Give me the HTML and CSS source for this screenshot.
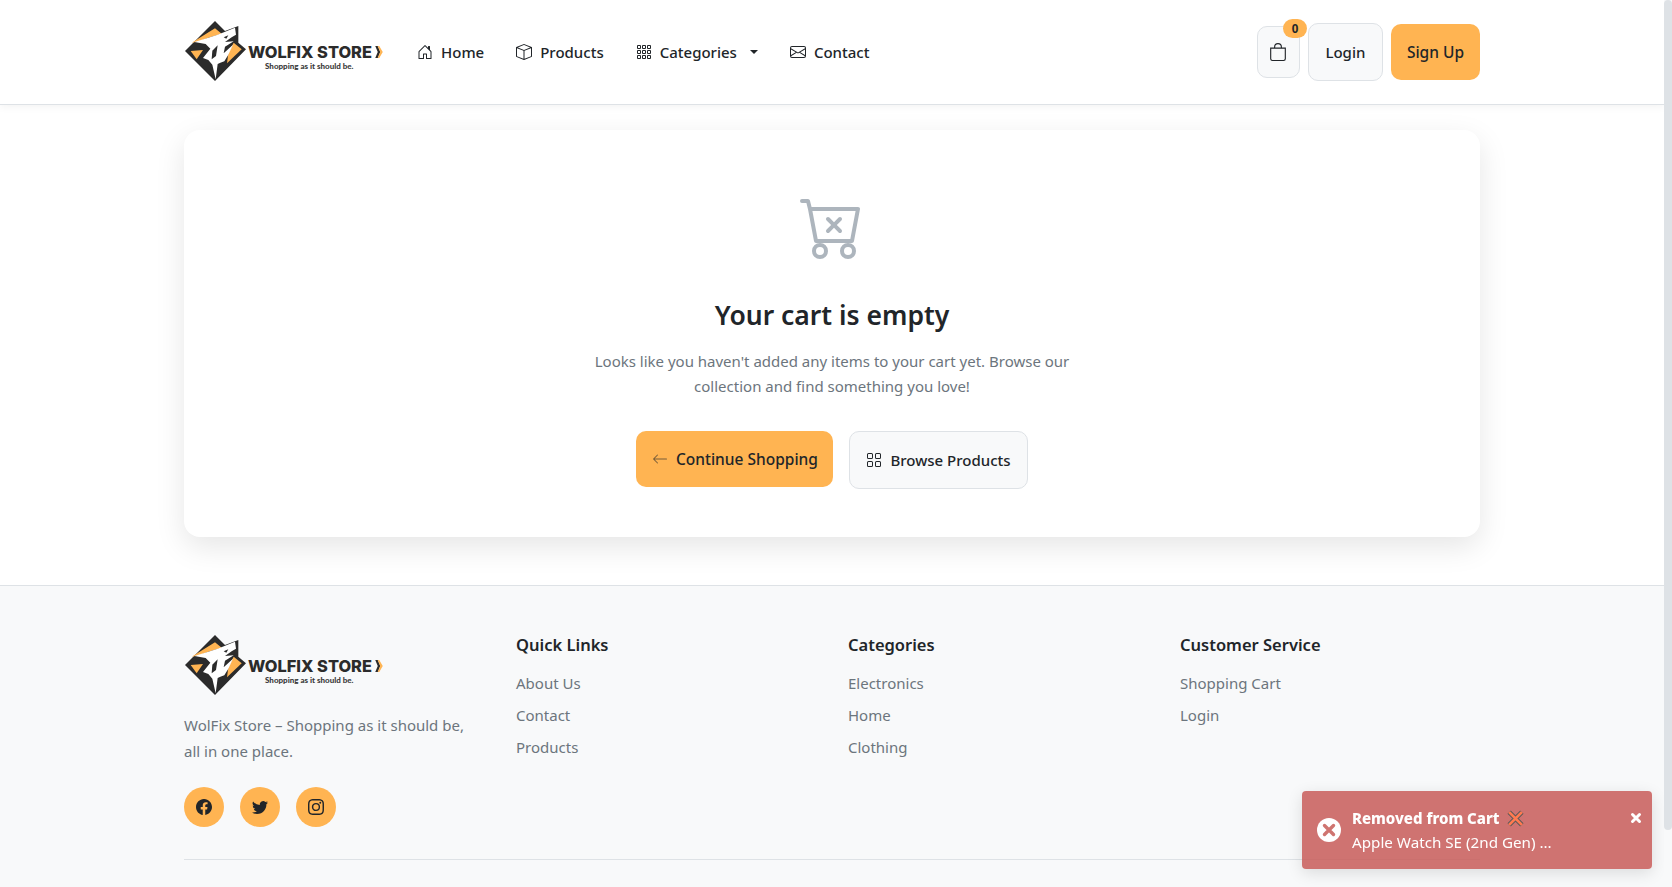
FILE: index.html
```html
<!DOCTYPE html>
<html lang="en">
<head>
<meta charset="utf-8">
<title>WolFix Store – Cart</title>
<link rel="stylesheet" href="styles.css">
</head>
<body>
<svg class="defs" width="0" height="0" aria-hidden="true">
  <defs>
    <symbol id="wolf" viewBox="27 32 186 186">
      <path fill="#2b2b2b" d="M120 35 L150 65 L190 50 L190 100 L213 120 L120 215 L30 125Z"/>
      <path fill="#ffb452" d="M50 100 L120 57 L140 73 L100 85 L75 95Z"/>
      <path fill="#ffb452" d="M47 125 L84 122 L65 150Z"/>
      <path fill="#ffb452" d="M176 100 L200 120 L156 162 L160 132Z"/>
      <path fill="#fff" d="M58 98 L100 85 L128 76 L180 55 L183 76 L170 84 L150 98 L176 96 L150 112 L146 132 L174 106 L160 136 L148 156 L136 160 L128 164 L122 210 L112 166 L100 152 L84 146 L106 118 L92 104Z"/>
      <path fill="#2b2b2b" d="M146 84 L160 78 L154 88Z"/>
      <path fill="#2b2b2b" d="M112 124 L128 108 L123 140 L110 150Z"/>
    </symbol>
    <symbol id="chev" viewBox="0 0 7.500 12">
      <path fill="#2b2b2b" d="M0 0H2.500L5 6 2.500 12H0L2.500 6z"/>
      <path fill="#ffb452" d="M2.500 0H4L7.500 6 4 12H2.500L5 6z"/>
    </symbol>
    <symbol id="i-house" viewBox="0 0 16 16"><path d="M8.354 1.146a.5.5 0 0 0-.708 0l-6 6A.5.5 0 0 0 1.5 7.5v7a.5.5 0 0 0 .5.5h4.5a.5.5 0 0 0 .5-.5v-4h2v4a.5.5 0 0 0 .5.5H14a.5.5 0 0 0 .5-.5v-7a.5.5 0 0 0-.146-.354L13 5.793V2.5a.5.5 0 0 0-.5-.5h-1a.5.5 0 0 0-.5.5v1.293zM2.500 14V7.707l5.500-5.500 5.500 5.500V14H10v-4a.5.5 0 0 0-.5-.5h-3a.5.5 0 0 0-.5.5v4z"/></symbol>
    <symbol id="i-box" viewBox="0 0 16 16"><path d="M8.186 1.113a.5.5 0 0 0-.372 0L1.846 3.5 8 5.961 14.154 3.5zM15 4.239l-6.5 2.6v7.922l6.5-2.6V4.24zM7.5 14.762V6.838L1 4.239v7.925zM7.443.184a1.5 1.5 0 0 1 1.114 0l7.129 2.852A.5.5 0 0 1 16 3.5v8.662a1 1 0 0 1-.629.928l-7.185 2.874a.5.5 0 0 1-.372 0L.63 13.09a1 1 0 0 1-.63-.928V3.5a.5.5 0 0 1 .314-.464z"/></symbol>
    <symbol id="i-grid3" viewBox="0 0 16 16"><path d="M4 2v2H2V2zm1 12v-2a1 1 0 0 0-1-1H2a1 1 0 0 0-1 1v2a1 1 0 0 0 1 1h2a1 1 0 0 0 1-1m0-5V7a1 1 0 0 0-1-1H2a1 1 0 0 0-1 1v2a1 1 0 0 0 1 1h2a1 1 0 0 0 1-1m0-5V2a1 1 0 0 0-1-1H2a1 1 0 0 0-1 1v2a1 1 0 0 0 1 1h2a1 1 0 0 0 1-1m5 10v-2a1 1 0 0 0-1-1H7a1 1 0 0 0-1 1v2a1 1 0 0 0 1 1h2a1 1 0 0 0 1-1m0-5V7a1 1 0 0 0-1-1H7a1 1 0 0 0-1 1v2a1 1 0 0 0 1 1h2a1 1 0 0 0 1-1m0-5V2a1 1 0 0 0-1-1H7a1 1 0 0 0-1 1v2a1 1 0 0 0 1 1h2a1 1 0 0 0 1-1M9 2v2H7V2zm5 0v2h-2V2zM4 7v2H2V7zm5 0v2H7V7zm5 0h-2v2h2zM4 12v2H2v-2zm5 0v2H7v-2zm5 0v2h-2v-2zM12 1a1 1 0 0 0-1 1v2a1 1 0 0 0 1 1h2a1 1 0 0 0 1-1V2a1 1 0 0 0-1-1zm-1 6a1 1 0 0 1 1-1h2a1 1 0 0 1 1 1v2a1 1 0 0 1-1 1h-2a1 1 0 0 1-1-1zm1 4a1 1 0 0 0-1 1v2a1 1 0 0 0 1 1h2a1 1 0 0 0 1-1v-2a1 1 0 0 0-1-1z"/></symbol>
    <symbol id="i-env" viewBox="0 0 16 16"><path d="M0 4a2 2 0 0 1 2-2h12a2 2 0 0 1 2 2v8a2 2 0 0 1-2 2H2a2 2 0 0 1-2-2zm2-1a1 1 0 0 0-1 1v.217l7 4.2 7-4.2V4a1 1 0 0 0-1-1zm13 2.383-4.708 2.825L15 11.105zm-.034 6.876-5.64-3.471L8 9.583l-1.326-.795-5.64 3.47A1 1 0 0 0 2 13h12a1 1 0 0 0 .966-.741M1 11.105l4.708-2.897L1 5.383z"/></symbol>
  </defs>
</svg>

<div class="page">
<header class="site-header">
  <div class="wrap header-row">
    <a class="logo" href="#">
      <svg class="logo-mark"><use href="#wolf"/></svg>
      <span class="logo-words">
        <span class="logo-name">WOLFIX STORE<svg class="logo-chev"><use href="#chev"/></svg></span>
        <span class="logo-tag">Shopping as it should be.</span>
      </span>
    </a>
    <nav class="main-nav">
      <a class="nav-link" href="#"><svg class="ico"><use href="#i-house"/></svg>Home</a>
      <a class="nav-link" href="#"><svg class="ico"><use href="#i-box"/></svg>Products</a>
      <a class="nav-link" href="#"><svg class="ico"><use href="#i-grid3"/></svg>Categories<span class="caret"></span></a>
      <a class="nav-link" href="#"><svg class="ico"><use href="#i-env"/></svg>Contact</a>
    </nav>
    <div class="header-actions">
      <a class="cart-btn" href="#">
        <svg class="ico ico-bag" viewBox="0 0 16 16"><path d="M8 1a2.5 2.5 0 0 1 2.5 2.5V4h-5v-.5A2.5 2.5 0 0 1 8 1m3.5 3v-.5a3.5 3.5 0 1 0-7 0V4H1v10a2 2 0 0 0 2 2h10a2 2 0 0 0 2-2V4zM2 5h12v9a1 1 0 0 1-1 1H3a1 1 0 0 1-1-1z"/></svg>
        <span class="badge">0</span>
      </a>
      <a class="btn btn-light btn-login" href="#">Login</a>
      <a class="btn btn-primary btn-signup" href="#">Sign Up</a>
    </div>
  </div>
</header>

<main class="wrap main-area">
  <section class="empty-card">
    <svg class="empty-icon" viewBox="0 0 16 16"><path d="M7.354 5.646a.5.5 0 1 0-.708.708L7.793 7.5 6.646 8.646a.5.5 0 1 0 .708.708L8.5 8.207l1.146 1.147a.5.5 0 0 0 .708-.708L9.207 7.5l1.147-1.146a.5.5 0 0 0-.708-.708L8.5 6.793z"/><path d="M.5 1a.5.5 0 0 0 0 1h1.11l.401 1.607 1.498 7.985A.5.5 0 0 0 4 12h1a2 2 0 1 0 0 4 2 2 0 0 0 0-4h7a2 2 0 1 0 0 4 2 2 0 0 0 0-4h1a.5.5 0 0 0 .491-.408l1.5-8A.5.5 0 0 0 14.5 3H2.89l-.405-1.621A.5.5 0 0 0 2 1zm3.915 10L3.102 4h10.796l-1.313 7zM6 14a1 1 0 1 1-2 0 1 1 0 0 1 2 0m7 0a1 1 0 1 1-2 0 1 1 0 0 1 2 0"/></svg>
    <h1 class="empty-title">Your cart is empty</h1>
    <p class="empty-text">Looks like you haven't added any items to your cart yet. Browse our collection and find something you love!</p>
    <div class="empty-actions">
      <a class="btn btn-primary" href="#"><svg class="ico ico-arrow" viewBox="0 0 16 16"><path d="M15 8a.5.5 0 0 0-.5-.5H2.707l3.147-3.146a.5.5 0 1 0-.708-.708l-4 4a.5.5 0 0 0 0 .708l4 4a.5.5 0 0 0 .708-.708L2.707 8.5H14.5A.5.5 0 0 0 15 8"/></svg>Continue Shopping</a>
      <a class="btn btn-light" href="#"><svg class="ico" viewBox="0 0 16 16"><path d="M1 2.5A1.5 1.5 0 0 1 2.5 1h3A1.5 1.5 0 0 1 7 2.5v3A1.5 1.5 0 0 1 5.5 7h-3A1.5 1.5 0 0 1 1 5.5zM2.5 2a.5.5 0 0 0-.5.5v3a.5.5 0 0 0 .5.5h3a.5.5 0 0 0 .5-.5v-3a.5.5 0 0 0-.5-.5zm6.5.5A1.5 1.5 0 0 1 10.5 1h3A1.5 1.5 0 0 1 15 2.5v3A1.5 1.5 0 0 1 13.5 7h-3A1.5 1.5 0 0 1 9 5.5zm1.5-.5a.5.5 0 0 0-.5.5v3a.5.5 0 0 0 .5.5h3a.5.5 0 0 0 .5-.5v-3a.5.5 0 0 0-.5-.5zM1 10.5A1.5 1.5 0 0 1 2.5 9h3A1.5 1.5 0 0 1 7 10.5v3A1.5 1.5 0 0 1 5.5 15h-3A1.5 1.5 0 0 1 1 13.5zm1.5-.5a.5.5 0 0 0-.5.5v3a.5.5 0 0 0 .5.5h3a.5.5 0 0 0 .5-.5v-3a.5.5 0 0 0-.5-.5zm6.5.5A1.5 1.5 0 0 1 10.5 9h3a1.5 1.5 0 0 1 1.5 1.5v3a1.5 1.5 0 0 1-1.5 1.5h-3A1.5 1.5 0 0 1 9 13.5zm1.5-.5a.5.5 0 0 0-.5.5v3a.5.5 0 0 0 .5.5h3a.5.5 0 0 0 .5-.5v-3a.5.5 0 0 0-.5-.5z"/></svg>Browse Products</a>
    </div>
  </section>
</main>

<footer class="site-footer">
  <div class="wrap">
    <div class="footer-grid">
      <div class="footer-brand">
        <a class="logo" href="#">
          <svg class="logo-mark"><use href="#wolf"/></svg>
          <span class="logo-words">
            <span class="logo-name">WOLFIX STORE<svg class="logo-chev"><use href="#chev"/></svg></span>
            <span class="logo-tag">Shopping as it should be.</span>
          </span>
        </a>
        <p class="brand-text">WolFix Store – Shopping as it should be, all in one place.</p>
        <div class="socials">
          <a class="social" href="#"><svg class="ico ico-social" viewBox="0 0 16 16"><path d="M16 8.049c0-4.446-3.582-8.05-8-8.05C3.58 0-.002 3.603-.002 8.05c0 4.017 2.926 7.347 6.75 7.951v-5.625h-2.03V8.05H6.75V6.275c0-2.017 1.195-3.131 3.022-3.131.876 0 1.791.157 1.791.157v1.98h-1.009c-.993 0-1.303.621-1.303 1.258v1.51h2.218l-.354 2.326H9.25V16c3.824-.604 6.75-3.934 6.75-7.951"/></svg></a>
          <a class="social" href="#"><svg class="ico ico-social" viewBox="0 0 16 16"><path d="M5.026 15c6.038 0 9.341-5.003 9.341-9.334q.002-.211-.006-.422A6.7 6.7 0 0 0 16 3.542a6.7 6.7 0 0 1-1.889.518 3.3 3.3 0 0 0 1.447-1.817 6.5 6.5 0 0 1-2.087.793A3.286 3.286 0 0 0 7.875 6.03a9.32 9.32 0 0 1-6.767-3.429 3.29 3.29 0 0 0 1.018 4.382A3.3 3.3 0 0 1 .64 6.575v.045a3.29 3.29 0 0 0 2.632 3.218 3.2 3.2 0 0 1-.865.115 3 3 0 0 1-.614-.057 3.28 3.28 0 0 0 3.067 2.277A6.6 6.6 0 0 1 .78 13.58a6 6 0 0 1-.78-.045A9.34 9.34 0 0 0 5.026 15"/></svg></a>
          <a class="social" href="#"><svg class="ico ico-social" viewBox="0 0 16 16"><path d="M8 0C5.829 0 5.556.01 4.703.048 3.85.088 3.269.222 2.76.42a3.9 3.9 0 0 0-1.417.923A3.9 3.9 0 0 0 .42 2.76C.222 3.268.087 3.85.048 4.7.01 5.555 0 5.827 0 8.001c0 2.172.01 2.444.048 3.297.04.852.174 1.433.372 1.942.205.526.478.972.923 1.417.444.445.89.719 1.416.923.51.198 1.09.333 1.942.372C5.555 15.99 5.827 16 8 16s2.444-.01 3.298-.048c.851-.04 1.434-.174 1.943-.372a3.9 3.9 0 0 0 1.416-.923c.445-.445.718-.891.923-1.417.197-.509.332-1.09.372-1.942C15.99 10.445 16 10.173 16 8s-.01-2.445-.048-3.299c-.04-.851-.175-1.433-.372-1.941a3.9 3.9 0 0 0-.923-1.417A3.9 3.9 0 0 0 13.24.42c-.51-.198-1.092-.333-1.943-.372C10.443.01 10.172 0 7.998 0zm-.717 1.442h.718c2.136 0 2.389.007 3.232.046.78.035 1.204.166 1.486.275.373.145.64.319.92.599s.453.546.598.92c.11.281.24.705.275 1.485.039.843.047 1.096.047 3.231s-.008 2.389-.047 3.232c-.035.78-.166 1.203-.275 1.485a2.5 2.5 0 0 1-.599.919c-.28.28-.546.453-.92.598-.28.11-.704.24-1.485.276-.843.038-1.096.047-3.232.047s-2.39-.009-3.233-.047c-.78-.036-1.203-.166-1.485-.276a2.5 2.5 0 0 1-.92-.598 2.5 2.5 0 0 1-.6-.92c-.109-.281-.24-.705-.275-1.485-.038-.843-.046-1.096-.046-3.233s.008-2.388.046-3.231c.036-.78.166-1.204.276-1.486.145-.373.319-.64.599-.92s.546-.453.92-.598c.282-.11.705-.24 1.485-.276.738-.034 1.024-.044 2.515-.045zm4.988 1.328a.96.96 0 1 0 0 1.92.96.96 0 0 0 0-1.92m-4.27 1.122a4.109 4.109 0 1 0 0 8.217 4.109 4.109 0 0 0 0-8.217m0 1.441a2.667 2.667 0 1 1 0 5.334 2.667 2.667 0 0 1 0-5.334"/></svg></a>
        </div>
      </div>
      <div class="footer-col">
        <h2 class="footer-title">Quick Links</h2>
        <a class="footer-link" href="#">About Us</a>
        <a class="footer-link" href="#">Contact</a>
        <a class="footer-link" href="#">Products</a>
      </div>
      <div class="footer-col">
        <h2 class="footer-title">Categories</h2>
        <a class="footer-link" href="#">Electronics</a>
        <a class="footer-link" href="#">Home</a>
        <a class="footer-link" href="#">Clothing</a>
      </div>
      <div class="footer-col">
        <h2 class="footer-title">Customer Service</h2>
        <a class="footer-link" href="#">Shopping Cart</a>
        <a class="footer-link" href="#">Login</a>
      </div>
    </div>
    <hr class="footer-rule">
  </div>
</footer>
</div>

<aside class="toast">
  <svg class="toast-icon" viewBox="0 0 24 24"><circle cx="12" cy="12" r="12" fill="#fff"/><path d="M7.500 7.500l9 9M16.500 7.500l-9 9" stroke="#cf7470" stroke-width="3.400" stroke-linecap="round"/></svg>
  <div class="toast-body">
    <div class="toast-title">Removed from Cart<svg class="toast-x" viewBox="0 0 16 16"><path d="M2 2l12 12M14 2L2 14" stroke="#5e5a5a" stroke-width="4.500"/><path d="M2 2l12 12M14 2L2 14" stroke="#ff7a50" stroke-width="2.600"/></svg></div>
    <div class="toast-msg">Apple Watch SE (2nd Gen) ...</div>
  </div>
  <svg class="toast-close" viewBox="0 0 12 12"><path d="M2.500 2.500l7 7M9.500 2.500l-7 7" stroke="#fff" stroke-width="3" stroke-linecap="round"/></svg>
</aside>
<div class="scroll-track"><div class="scroll-thumb"></div></div>
</body>
</html>
```
FILE: styles.css
```css
* { box-sizing: border-box; }
body {
  margin: 0;
  font-family: "Noto Sans", "Open Sans", sans-serif;
  font-size: 15px;
  line-height: 24px;
  color: #212529;
  background: #fff;
}
a { color: inherit; text-decoration: none; }
.defs { position: absolute; }
.page { margin-right: 8px; }
.wrap { width: 1296px; margin: 0 auto; }

.scroll-track { position: fixed; top: 0; right: 0; bottom: 0; width: 8px; background: #f8f9fa; }
.scroll-thumb { height: 830px; background: #dee2e6; border-radius: 4px; }

.site-header {
  height: 105px;
  background: #fff;
  border-bottom: 1px solid #dee2e6;
  box-shadow: 0 2px 8px rgba(0, 0, 0, .05);
}
.header-row { display: flex; align-items: center; height: 104px; }

.logo { display: flex; align-items: flex-start; width: 200px; height: 64px; flex: none; }
.logo-mark { width: 62px; height: 62px; flex: none; }
.logo-words { display: flex; flex-direction: column; margin: 23px 0 0 2px; }
.logo-name {
  display: flex;
  align-items: center;
  font-family: Inter, sans-serif;
  font-weight: 800;
  font-size: 16.400px;
  line-height: 18px;
  color: #2b2b2b;
  white-space: nowrap;
}
.logo-chev { width: 8px; height: 12px; margin-left: 3px; }
.logo-tag {
  font-family: Lato, sans-serif;
  font-weight: 900;
  font-size: 8px;
  line-height: 10px;
  margin-left: 17px;
  color: #3a3a3a;
  white-space: nowrap;
}

.main-nav { display: flex; align-items: center; margin-left: 17px; }
.nav-link {
  display: flex;
  align-items: center;
  padding: 8px 16px;
  font-weight: 500;
}
.ico { width: 16px; height: 16px; flex: none; fill: currentColor; margin-right: 8px; }
.caret {
  width: 0;
  height: 0;
  margin-left: 13px;
  border-top: 4.800px solid #212529;
  border-left: 4.800px solid transparent;
  border-right: 4.800px solid transparent;
}

.header-actions { display: flex; align-items: center; gap: 8px; margin-left: auto; }
.cart-btn {
  position: relative;
  display: flex;
  align-items: center;
  justify-content: center;
  width: 43px;
  height: 52px;
  background: #f8f9fa;
  border: 1px solid #dee2e6;
  border-radius: 10px;
}
.ico-bag { width: 18px; height: 18px; margin: 0; }
.badge {
  position: absolute;
  top: -8px;
  right: -8px;
  width: 24px;
  height: 19px;
  background: #ffb452;
  border-radius: 10px;
  font-size: 11.500px;
  line-height: 19px;
  font-weight: 700;
  text-align: center;
}
.btn {
  display: inline-flex;
  align-items: center;
  justify-content: center;
  padding: 16px;
  font-weight: 500;
  border-radius: 10px;
  white-space: nowrap;
}
.btn-primary { height: 56px; padding: 16px 15.500px; background: #ffb452; font-size: 15.500px; }
.btn-signup { padding: 16px; }
.btn-light { height: 58px; background: #f8f9fa; border: 1px solid #dee2e6; }
.btn-login { padding: 16px 16.500px; }

.main-area { padding: 25px 0 48px; }
.empty-card {
  display: flex;
  flex-direction: column;
  align-items: center;
  height: 407px;
  padding-top: 65px;
  background: #fff;
  border-radius: 16px;
  box-shadow: 0 10px 30px rgba(0, 0, 0, .1);
}
.empty-icon { width: 64px; height: 64px; fill: #adb5bd; flex: none; }
.empty-title { margin: 38px 0 16px; font-size: 26.500px; line-height: 36px; font-weight: 600; }
.empty-text { margin: 0 0 32px; width: 500px; color: #6c757d; text-align: center; line-height: 25px; }
.empty-actions { display: flex; align-items: flex-start; gap: 16px; }
.ico-arrow { opacity: .6; }

.site-footer { background: #f8f9fa; border-top: 1px solid #dee2e6; padding: 48px 0 60px; }
.footer-grid { display: grid; grid-template-columns: repeat(4, 300px); gap: 32px; }
.footer-brand .logo { margin-bottom: 14px; }
.brand-text { margin: 0 0 23px; width: 285px; color: #6c757d; line-height: 26px; }
.socials { display: flex; gap: 16px; }
.social {
  display: flex;
  align-items: center;
  justify-content: center;
  width: 40px;
  height: 40px;
  background: #ffb452;
  border-radius: 50%;
}
.ico-social { margin: 0; }
.footer-col { display: flex; flex-direction: column; align-items: flex-start; }
.footer-title { margin: 0 0 11px; font-size: 16.500px; line-height: 22px; font-weight: 600; }
.footer-link { color: #6c757d; height: 32px; line-height: 32px; }
.footer-rule { margin: 32px 0 0; border: 0; border-top: 1px solid #dee2e6; }

.toast {
  position: fixed;
  right: 20px;
  bottom: 18px;
  display: flex;
  align-items: center;
  width: 350px;
  height: 78px;
  padding: 0 10px 0 15px;
  background: rgba(200, 92, 88, .85);
  border-radius: 4px;
  box-shadow: 0 4px 16px rgba(0, 0, 0, .12);
  color: #fff;
}
.toast-icon { width: 24px; height: 24px; flex: none; margin-right: 11px; }
.toast-body { flex: 1; }
.toast-title { display: flex; align-items: center; font-weight: 800; }
.toast-x { width: 17px; height: 17px; margin-left: 8px; }
.toast-msg { font-size: 15.200px; }
.toast-close { width: 12px; height: 12px; align-self: flex-start; margin-top: 21px; }
```
